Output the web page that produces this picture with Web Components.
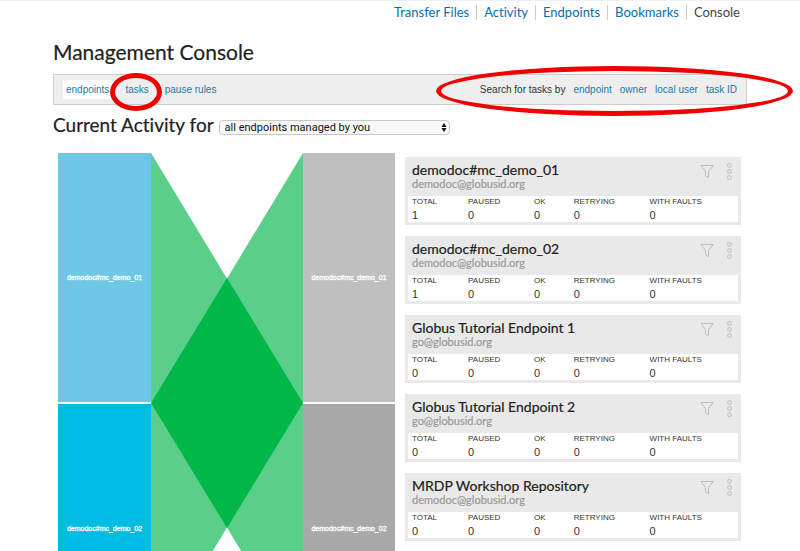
<!DOCTYPE html>
<html lang="en">
<head>
<meta charset="utf-8">
<title>Management Console</title>
<style>
html { scrollbar-width: none; }
body { margin: 0; background: #fff; color: #222; font-family: Lato, "Open Sans", sans-serif; font-variant-ligatures: none; }
</style>
</head>
<body>
<console-page></console-page>
<script>
const define = (name, html, setup) => {
  const template = document.createElement('template');
  template.innerHTML = html;
  customElements.define(name, class extends HTMLElement {
    connectedCallback() {
      if (this.shadowRoot) return;
      this.attachShadow({ mode: 'open' }).append(template.content.cloneNode(true));
      if (setup) setup(this, this.shadowRoot);
    }
  });
};

define('site-nav', `
<style>
:host { display: block; border-top: 1px solid #edf3f9; }
nav { display: flex; justify-content: flex-end; padding: 4px 0 0; font-size: 13px; line-height: 15px; }
a { padding: 0 7px; color: #0a6cab; text-decoration: none; border-left: 1px solid #ccc; }
a:first-child { border-left: 0; }
a[aria-current] { color: #444; }
</style>
<nav>
<a href="#transfer">Transfer Files</a><a href="#activity">Activity</a><a href="#endpoints">Endpoints</a><a href="#bookmarks">Bookmarks</a><a href="#console" aria-current="page">Console</a>
</nav>`);

define('red-ring', `
<style>
:host { display: block; position: absolute; pointer-events: none; box-sizing: border-box; border: 5px solid #f00000; border-radius: 50%; }
</style>`);

define('console-toolbar', `
<style>
:host { display: flex; justify-content: space-between; align-items: center; height: 29px; padding: 0 9px; background: #eee; border: 1px solid #ccc; font: 10px/19px "Liberation Sans", Arial, sans-serif; }
nav, .search { display: flex; position: relative; }
nav { gap: 10px; }
a { color: #1b7ba6; text-decoration: none; }
nav a { padding: 0 3px; }
a[aria-current] { background: #fff; }
.tasks { position: relative; }
.search { gap: 8px; }
.search span { color: #333; }
.tasks red-ring { width: 52px; height: 38px; left: -12px; top: -7px; }
.search red-ring { left: -44px; right: -56px; top: -14px; height: 50px; }
</style>
<nav><a href="#endpoints" aria-current="page">endpoints</a><a class="tasks" href="#tasks">tasks<red-ring></red-ring></a><a href="#pause">pause rules</a></nav>
<div class="search"><span>Search for tasks by</span><a href="#endpoint">endpoint</a><a href="#owner">owner</a><a href="#user">local user</a><a href="#task">task ID</a><red-ring></red-ring></div>`);

define('endpoint-picker', `
<style>
:host { display: inline-grid; width: 231px; align-items: center; }
select { grid-area: 1 / 1; appearance: none; width: 100%; height: 15px; margin: 0; padding: 0 5px; border: 1px solid #c8c8c8; border-radius: 4px; background: #f8f8f8; color: #111; font: 11px/13px Roboto, sans-serif; }
svg { grid-area: 1 / 1; justify-self: end; margin-right: 3px; pointer-events: none; }
</style>
<select aria-label="Endpoints to show"><option>all endpoints managed by you</option></select>
<svg width="6" height="9" viewBox="0 0 6 9" fill="#111"><path d="M3 0 5.5 4H.5zM3 9 5.5 5H.5z"/></svg>`);

define('activity-node', `
<style>
:host { display: flex; align-items: center; justify-content: center; color: #fff; font: 7px/10px "Liberation Sans", Arial, sans-serif; -webkit-text-stroke: 0.3px #fff; }
</style>
<slot></slot>`);

define('activity-chart', `
<style>
:host { display: grid; grid-template-columns: 93fr 152fr 92fr; }
.col { display: grid; grid-template-rows: 249px 249px; gap: 2px; }
svg { display: block; width: 100%; height: 500px; }
</style>
<div class="col"><activity-node style="background:#6ec7e6">demodoc#mc_demo_01</activity-node><activity-node style="background:#00bbe4">demodoc#mc_demo_02</activity-node></div>
<svg viewBox="0 0 152 500" preserveAspectRatio="none" aria-hidden="true">
<path fill="#5bcf89" d="M0 0 152 251V500L0 249z"/>
<path fill="#5bcf89" d="M152 0 0 251V500L152 249z"/>
<path fill="#00b74a" d="M76 125 152 250 76 375 0 250z"/>
</svg>
<div class="col"><activity-node style="background:#bfbfbf">demodoc#mc_demo_01</activity-node><activity-node style="background:#a9a9a9">demodoc#mc_demo_02</activity-node></div>`);

define('endpoint-card', `
<style>
:host { display: block; background: #e9e9e9; padding: 4px 3px 3px; }
header { display: flex; justify-content: space-between; padding: 0 5px 0 4px; height: 35px; }
h3 { margin: 0; font-size: 14px; line-height: 17px; font-weight: 400; color: #222; -webkit-text-stroke: 0.2px; }
p { margin: 0; font-size: 11px; line-height: 12px; color: #999; -webkit-text-stroke: 0.2px; }
.tools { display: flex; gap: 12px; }
button { display: block; border: 0; padding: 0; margin: 0; background: none; height: 21px; }
svg { display: block; fill: none; stroke: #bcbcbc; }
table { width: 100%; table-layout: fixed; border-collapse: collapse; background: #fff; font-family: "Liberation Sans", Arial, sans-serif; color: #333; text-align: left; }
th, td { padding: 0 0 0 4px; font-weight: 400; }
th { font-size: 8px; line-height: 12px; white-space: nowrap; }
td { font-size: 11px; line-height: 14px; }
</style>
<header>
<div><h3><slot></slot></h3><p><slot name="owner"></slot></p></div>
<div class="tools">
<button type="button" aria-label="Filter"><svg width="14" height="21" viewBox="0 0 14 21"><path d="M.8 4.5H13.2L8.5 10.5V16.5L5.5 15V10.5z"/></svg></button>
<button type="button" aria-label="More"><svg width="7" height="21" viewBox="0 0 7 21"><circle cx="3.5" cy="4.4" r="1.9"/><circle cx="3.5" cy="10.5" r="1.9"/><circle cx="3.5" cy="16.6" r="1.9"/></svg></button>
</div>
</header>
<table>
<colgroup><col style="width:17%"><col style="width:20%"><col style="width:12%"><col style="width:23%"><col></colgroup>
<thead><tr><th>TOTAL</th><th>PAUSED</th><th>OK</th><th>RETRYING</th><th>WITH FAULTS</th></tr></thead>
<tbody><tr><td class="total"></td><td>0</td><td>0</td><td>0</td><td>0</td></tr></tbody>
</table>`, (host, root) => { root.querySelector('.total').textContent = host.getAttribute('total'); });

define('console-page', `
<style>
:host { display: block; }
site-nav { padding-right: 53px; }
main { padding: 0 53px; }
h1, h2 { margin: 0; font-size: 21px; line-height: 26px; font-weight: 400; color: #222; -webkit-text-stroke: 0.2px; }
h1 { padding: 19px 0 9px; }
h2 { font-size: 19px; line-height: 26px; }
.activity { display: flex; align-items: center; gap: 5px; padding-top: 7px; }
endpoint-picker { margin-top: 5px; }
.columns { display: grid; grid-template-columns: 337fr 336fr; gap: 10px; padding: 15px 6px 0 5px; }
.cards { display: grid; gap: 11px; align-content: start; padding-top: 4px; }
</style>
<site-nav></site-nav>
<main>
<h1>Management Console</h1>
<console-toolbar></console-toolbar>
<div class="activity"><h2>Current Activity for</h2><endpoint-picker></endpoint-picker></div>
<div class="columns">
<activity-chart></activity-chart>
<div class="cards">
<endpoint-card total="1">demodoc#mc_demo_01<span slot="owner">demodoc@globusid.org</span></endpoint-card>
<endpoint-card total="1">demodoc#mc_demo_02<span slot="owner">demodoc@globusid.org</span></endpoint-card>
<endpoint-card total="0">Globus Tutorial Endpoint 1<span slot="owner">go@globusid.org</span></endpoint-card>
<endpoint-card total="0">Globus Tutorial Endpoint 2<span slot="owner">go@globusid.org</span></endpoint-card>
<endpoint-card total="0">MRDP Workshop Repository<span slot="owner">demodoc@globusid.org</span></endpoint-card>
</div>
</div>
</main>`);
</script>
</body>
</html>
